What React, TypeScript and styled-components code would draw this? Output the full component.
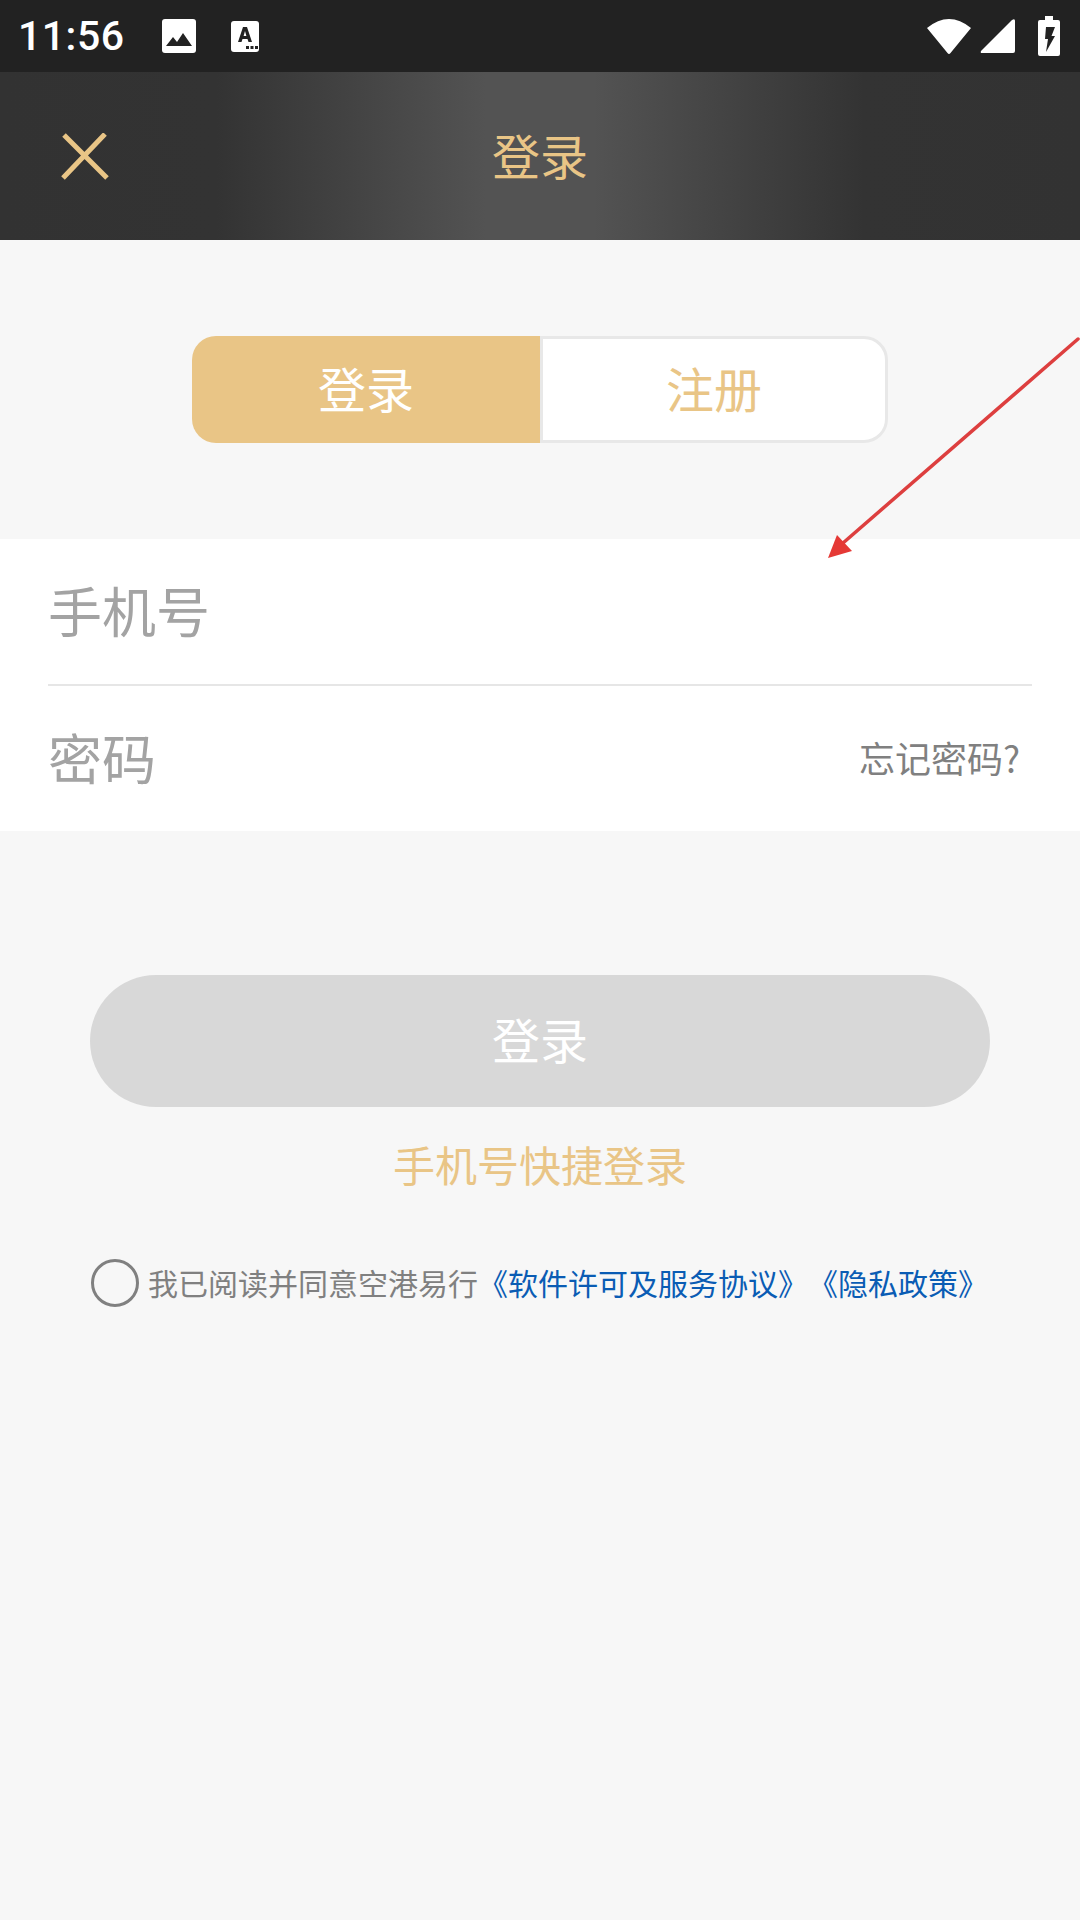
import styled, { createGlobalStyle } from "styled-components";

const GlobalStyle = createGlobalStyle`
    html, body {
        margin: 0;
        padding: 0;
        background: #f7f7f7;
    }
    body {
        font-family: "Noto Sans CJK SC", "Noto Sans", sans-serif;
    }
`;

const App = () => {
    return (
        <Page>
            <GlobalStyle />
            <StatusBar>
                <StatusLeft>
                    <Time>11:56</Time>
                    <svg width="36" height="36" viewBox="0 0 36 36" style={{ marginLeft: 36 }}>
                        <rect x="1" y="1" width="34" height="34" rx="3" fill="#fff" />
                        <path d="M5 28 L12 19 L16 24 L22 15 L31 28 Z" fill="#222" />
                    </svg>
                    <svg width="28" height="32" viewBox="0 0 28 32" style={{ marginLeft: 34 }}>
                        <rect x="0" y="1" width="28" height="31" rx="3" fill="#fff" />
                        <path d="M7 22 L12 7 H16 L21 22 H17.5 L16.5 19 H11.5 L10.5 22 Z M12.6 16 H15.4 L14 11 Z" fill="#222" fillRule="evenodd" />
                        <rect x="15" y="26" width="3" height="3" fill="#222" />
                        <rect x="19.5" y="26" width="3" height="3" fill="#222" />
                        <rect x="24" y="26" width="3" height="3" fill="#222" />
                    </svg>
                </StatusLeft>
                <StatusRight>
                    <svg width="46" height="38" viewBox="0 0 46 38">
                        <path d="M1 11 Q23 -7 45 11 L24.5 36 Q23 38 21.5 36 Z" fill="#fff" />
                    </svg>
                    <svg width="36" height="36" viewBox="0 0 36 36" style={{ marginLeft: 8 }}>
                        <path d="M1 33 L32 2 Q35 0 35 3 V33 Q35 35 33 35 H2 Q0 35 1 33 Z" fill="#fff" />
                    </svg>
                    <svg width="22" height="40" viewBox="0 0 22 40" style={{ marginLeft: 22 }}>
                        <path d="M7 0 H15 V4 H20 Q22 4 22 6 V38 Q22 40 20 40 H2 Q0 40 0 38 V6 Q0 4 2 4 H7 Z" fill="#fff" />
                        <path d="M8 11 H17 L13.5 20 H17 L8 36 L10 23 H7 Z" fill="#222" />
                    </svg>
                </StatusRight>
            </StatusBar>

            <Header>
                <CloseButton>
                    <svg width="48" height="48" viewBox="0 0 48 48">
                        <path d="M3 2 L46 45 M44 1 L2 45" stroke="#e9c586" strokeWidth="5" fill="none" />
                    </svg>
                </CloseButton>
                <HeaderTitle>登录</HeaderTitle>
            </Header>

            <Tabs>
                <Tab $active>登录</Tab>
                <Tab>注册</Tab>
            </Tabs>

            <Form>
                <Row>
                    <Label>手机号</Label>
                </Row>
                <Row $last>
                    <Label>密码</Label>
                    <Forgot>忘记密码?</Forgot>
                </Row>
            </Form>

            <Submit>登录</Submit>
            <QuickLogin>手机号快捷登录</QuickLogin>

            <Agreement>
                <Radio />
                <AgreeText>我已阅读并同意空港易行</AgreeText>
                <AgreeLink>《软件许可及服务协议》</AgreeLink>
                <AgreeLink>《隐私政策》</AgreeLink>
            </Agreement>

            <Arrow width="260" height="228" viewBox="0 0 260 228">
                <path d="M253 3 L18 207" stroke="#dd3f3f" strokeWidth="3.5" strokeLinecap="round" fill="none" />
                <path d="M3 222 L12 199 L27 215 Z" fill="#e53935" />
            </Arrow>
        </Page>
    );
};

const Page = styled.div`
    position: relative;
    width: 1080px;
    height: 1920px;
    overflow: hidden;
    display: flex;
    flex-direction: column;
    background: #f7f7f7;
`;

const StatusBar = styled.div`
    height: 72px;
    background: #222222;
    display: flex;
    align-items: center;
    justify-content: space-between;
    padding: 0 20px 0 18px;
    box-sizing: border-box;
`;

const StatusLeft = styled.div`
    display: flex;
    align-items: center;
`;

const StatusRight = styled.div`
    display: flex;
    align-items: center;
`;

const Time = styled.span`
    font-family: Roboto, sans-serif;
    font-size: 41px;
    font-weight: 500;
    color: #ffffff;
    letter-spacing: 0.5px;
`;

const Header = styled.div`
    position: relative;
    height: 168px;
    display: flex;
    align-items: center;
    justify-content: center;
    padding-bottom: 5px;
    box-sizing: border-box;
    background: linear-gradient(90deg, #323232 0%, #333333 20%, #535353 45%, #535353 55%, #333333 80%, #323232 100%);
`;

const CloseButton = styled.div`
    position: absolute;
    left: 61px;
    top: 61px;
    width: 48px;
    height: 48px;
`;

const HeaderTitle = styled.div`
    font-size: 48px;
    color: #e9c586;
`;

const Tabs = styled.div`
    align-self: center;
    width: 696px;
    height: 107px;
    margin-top: 96px;
    display: flex;
`;

const Tab = styled.div<{ $active?: boolean }>`
    width: 50%;
    box-sizing: border-box;
    display: flex;
    align-items: center;
    justify-content: center;
    padding-bottom: 6px;
    font-size: 48px;
    line-height: 60px;
    color: ${(p) => (p.$active ? "#ffffff" : "#e9c586")};
    background: ${(p) => (p.$active ? "#e9c586" : "#ffffff")};
    border: ${(p) => (p.$active ? "none" : "3px solid #e8e8e8")};
    border-radius: ${(p) => (p.$active ? "24px 0 0 24px" : "0 24px 24px 0")};
`;

const Form = styled.div`
    margin-top: 96px;
    background: #ffffff;
    padding: 0 48px;
    display: flex;
    flex-direction: column;
`;

const Row = styled.div<{ $last?: boolean }>`
    height: ${(p) => (p.$last ? "145px" : "147px")};
    padding-bottom: 5px;
    display: flex;
    align-items: center;
    justify-content: space-between;
    box-sizing: border-box;
    border-bottom: ${(p) => (p.$last ? "none" : "2px solid #e6e6e6")};
`;

const Label = styled.span`
    font-size: 54px;
    color: #a3a3a3;
`;

const Forgot = styled.span`
    font-size: 36px;
    color: #808080;
    margin-right: 12px;
    padding-top: 2px;
`;

const Submit = styled.div`
    align-self: center;
    width: 900px;
    height: 132px;
    margin-top: 144px;
    padding-bottom: 6px;
    box-sizing: border-box;
    border-radius: 66px;
    background: #d8d8d8;
    color: #ffffff;
    font-size: 48px;
    display: flex;
    align-items: center;
    justify-content: center;
`;

const QuickLogin = styled.div`
    margin-top: 27px;
    text-align: center;
    font-size: 42px;
    line-height: 60px;
    color: #e9c586;
`;

const Agreement = styled.div`
    margin-top: 65px;
    padding-left: 91px;
    display: flex;
    align-items: center;
    white-space: nowrap;
    font-size: 30px;
    line-height: 36px;
`;

const Radio = styled.div`
    width: 48px;
    height: 48px;
    box-sizing: border-box;
    border: 3px solid #808080;
    border-radius: 50%;
    margin-right: 9px;
`;

const AgreeText = styled.span`
    color: #808080;
    padding-bottom: 3px;
`;

const AgreeLink = styled.span`
    color: #0a5cb4;
    padding-bottom: 3px;
`;

const Arrow = styled.svg`
    position: absolute;
    left: 825px;
    top: 336px;
`;

export default App;
